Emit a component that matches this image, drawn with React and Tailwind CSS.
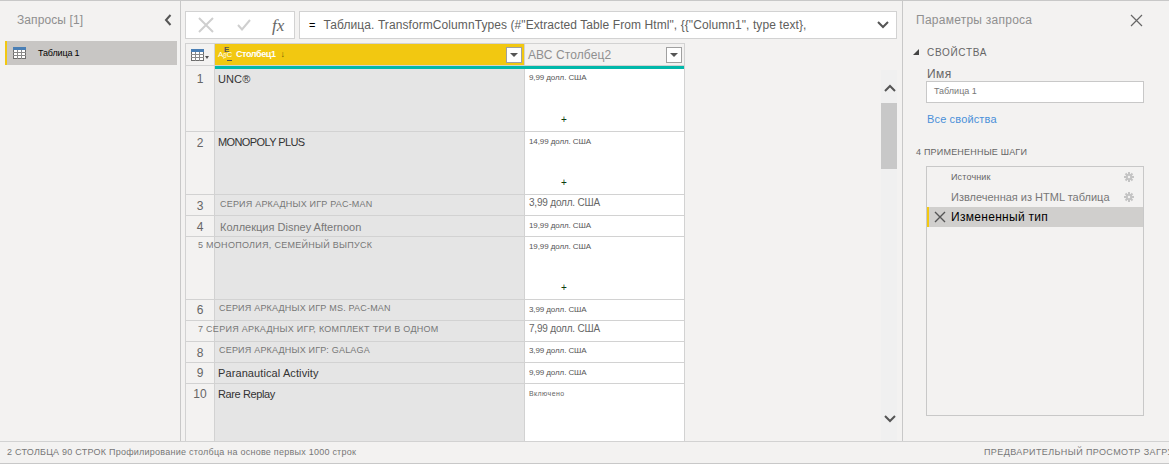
import React from "react";

function TableIcon() {
  return (
    <svg width="13" height="12" viewBox="0 0 13 12" className="shrink-0">
      <rect x="0.5" y="0.5" width="12" height="11" fill="#fff" stroke="#6d6d6d" />
      <rect x="0" y="0" width="13" height="3" fill="#4a7fb5" />
      <path d="M0 5.5H13M0 8.5H13M4.5 3V12M8.5 3V12" stroke="#8a8a8a" strokeWidth="1" />
    </svg>
  );
}

function FilterBtn() {
  return (
    <div className="w-[16px] h-[16px] border border-[#a0a0a0] bg-white flex items-center justify-center shrink-0">
      <svg width="8" height="4" viewBox="0 0 8 4"><path d="M0 0H8L4 4Z" fill="#555" /></svg>
    </div>
  );
}

function Gear() {
  return (
    <svg width="12" height="12" viewBox="0 0 12 12" className="shrink-0">
      <path d="M6 1V11M1 6H11M2.5 2.5L9.5 9.5M9.5 2.5L2.5 9.5" stroke="#c4c4c4" strokeWidth="2" />
      <circle cx="6" cy="6" r="3.2" fill="#c4c4c4" />
      <circle cx="6" cy="6" r="1.2" fill="#f3f2f1" />
    </svg>
  );
}

const GREY = "text-[9px] tracking-[0.2px] text-[#777]";
const DARK = "text-[11px] tracking-[0.1px] text-[#333]";
const P_SMALL = "text-[8px] tracking-[-0.1px] text-[#555]";
const P_BIG = "text-[10px] tracking-[-0.2px] text-[#666]";

const rows = [
  { n: "1", np: "pt-[1px]", h: "h-[63px]", name: "UNC®", nc: DARK, nx: "pl-[3px]", ny: "pt-[2px]", price: "9,99 долл. США", pc: P_SMALL, py: "pt-[2px]", plus: true },
  { n: "2", np: "pt-[2px]", h: "h-[63px]", name: "MONOPOLY PLUS", nc: "text-[11px] tracking-[-0.6px] text-[#333]", nx: "pl-[3px]", ny: "pt-[2px]", price: "14,99 долл. США", pc: P_SMALL, py: "pt-[3px]", plus: true },
  { n: "3", np: "pt-[2px]", h: "h-[21px]", name: "СЕРИЯ АРКАДНЫХ ИГР PAC-MAN", nc: GREY, nx: "pl-[5px]", ny: "pt-[1px]", price: "3,99 долл. США", pc: P_BIG, py: "pt-[1px]" },
  { n: "4", np: "pt-[2px]", h: "h-[21px]", name: "Коллекция Disney Afternoon", nc: "text-[11px] text-[#777]", nx: "pl-[5px]", ny: "pt-[3px]", price: "19,99 долл. США", pc: P_SMALL, py: "pt-[3px]" },
  { n: "5 МОНОПОЛИЯ, СЕМЕЙНЫЙ ВЫПУСК", over: true, h: "h-[63px]", price: "19,99 долл. США", pc: P_SMALL, py: "pt-[3px]", plus: true },
  { n: "6", np: "pt-[1px]", h: "h-[21px]", name: "СЕРИЯ АРКАДНЫХ ИГР MS. PAC-MAN", nc: GREY, nx: "pl-[4px]", ny: "pt-[0px]", price: "3,99 долл. США", pc: P_SMALL, py: "pt-[3px]" },
  { n: "7 СЕРИЯ АРКАДНЫХ ИГР, КОМПЛЕКТ ТРИ В ОДНОМ", over: true, h: "h-[21px]", price: "7,99 долл. США", pc: P_BIG, py: "pt-[1px]" },
  { n: "8", np: "pt-[2px]", h: "h-[21px]", name: "СЕРИЯ АРКАДНЫХ ИГР: GALAGA", nc: GREY, nx: "pl-[4px]", ny: "pt-[0px]", price: "3,99 долл. США", pc: P_SMALL, py: "pt-[2px]" },
  { n: "9", np: "pt-[1px]", h: "h-[21px]", name: "Paranautical Activity", nc: DARK, nx: "pl-[3px]", ny: "pt-[2px]", price: "9,99 долл. США", pc: P_SMALL, py: "pt-[3px]" },
  { n: "10", np: "pt-[1px]", h: "h-[57px]", name: "Rare Replay", nc: "text-[11px] tracking-[-0.4px] text-[#333]", nx: "pl-[3px]", ny: "pt-[2px]", price: "Включено", pc: "text-[7px] tracking-[0.4px] text-[#666]", py: "pt-[3px]", last: true },
];

function Row({ r }) {
  const b = r.last ? "" : "border-b border-[#d2d2d2]";
  return (
    <div className={`flex ${r.h}`}>
      <div className={`w-[29px] shrink-0 border-r border-[#d2d2d2] bg-[#f3f2f1] relative ${b}`}>
        {r.over ? (
          <span className="absolute left-[12px] top-[1px] z-10 whitespace-nowrap text-[9px] tracking-[0.28px] text-[#777] leading-[14px]">{r.n}</span>
        ) : (
          <div className={`text-center text-[12px] text-[#666] leading-[18px] ${r.np}`}>{r.n}</div>
        )}
      </div>
      <div className={`w-[309px] shrink-0 bg-[#e5e5e5] ${b} ${r.nx || ""} ${r.ny || ""}`}>
        {r.name && <span className={`block whitespace-nowrap leading-[16px] ${r.nc}`}>{r.name}</span>}
      </div>
      <div className={`w-[160px] shrink-0 bg-white border-l border-[#d2d2d2] relative pl-[4px] ${b} ${r.py}`}>
        <span className={`block whitespace-nowrap leading-[14px] ${r.pc}`}>{r.price}</span>
        {r.plus && <span className="absolute left-[36px] bottom-[6px] text-[10px] leading-[10px] font-medium text-[#0d3d0d]">+</span>}
      </div>
    </div>
  );
}

export default function App() {
  return (
    <div className="w-[1169px] h-[464px] bg-[#f3f2f1] flex flex-col overflow-hidden border-t border-b border-[#c8c8c8] font-['Liberation_Sans','Noto_Sans',sans-serif]">
      <div className="flex flex-1 min-h-0">
        {/* Left pane */}
        <div className="w-[181px] shrink-0 border-r border-[#c8c8c8] flex flex-col pt-[11px] pl-[5px]">
          <div className="flex items-center justify-between h-[16px] pl-[12px] pr-[8px]">
            <span className="text-[12px] tracking-[0.1px] text-[#8f8f8f] leading-[16px]">Запросы [1]</span>
            <svg width="8" height="12" viewBox="0 0 8 12"><path d="M6.5 1L2 6L6.5 11" fill="none" stroke="#555" strokeWidth="2" /></svg>
          </div>
          <div className="mt-[13px] h-[24px] w-[172px] bg-[#c8c6c4] border-l-2 border-[#f2c811] flex items-center pl-[6px]">
            <TableIcon />
            <span className="ml-[12px] pt-[2px] text-[9px] tracking-[-0.15px] text-black">Таблица 1</span>
          </div>
        </div>

        {/* Centre */}
        <div className="w-[721px] shrink-0 flex flex-col pl-[4px] pr-[5px] pt-[10px]">
          <div className="flex gap-[4px] h-[28px] shrink-0">
            <div className="w-[110px] border border-[#d2d2d2] bg-white flex items-center pl-[12px]">
              <svg width="16" height="16" viewBox="0 0 16 16"><path d="M1 1L15 15M15 1L1 15" stroke="#cfcfcf" strokeWidth="2" /></svg>
              <svg width="14" height="12" viewBox="0 0 14 12" className="ml-[23px]"><path d="M1 6L5 10.5L13 1" fill="none" stroke="#cfcfcf" strokeWidth="2" /></svg>
              <span className="ml-[21px] text-[17px] italic font-['Liberation_Serif',serif] text-[#666] leading-none">fx</span>
            </div>
            <div className="flex-1 border border-[#d2d2d2] bg-white flex items-center pl-[9px] pr-[7px]">
              <span className="text-[11px] text-black mr-[8px]">=</span>
              <span className="flex-1 text-[12px] tracking-[0.08px] text-[#605e5c] whitespace-nowrap overflow-hidden">Таблица. TransformColumnTypes (#"Extracted Table From Html", {'{{'}"Column1", type text},</span>
              <svg width="12" height="8" viewBox="0 0 12 8"><path d="M1 1L6 6L11 1" fill="none" stroke="#555" strokeWidth="2" /></svg>
            </div>
          </div>

          <div className="flex flex-1 min-h-0 mt-[4px]">
            {/* Table */}
            <div className="w-[500px] shrink-0 flex flex-col border-t border-l border-r border-[#d2d2d2] self-stretch">
              <div className="flex h-[21px] shrink-0">
                <div className="w-[29px] shrink-0 bg-[#f3f2f1] border-r border-[#d2d2d2] flex items-center pl-[5px]">
                  <TableIcon />
                  <svg width="4" height="3" viewBox="0 0 4 3" className="ml-[1px] mt-[5px]"><path d="M0 0H4L2 3Z" fill="#555" /></svg>
                </div>
                <div className="w-[309px] shrink-0 bg-[#f2c811] flex items-center pl-[3px] pr-[2px]">
                  <span className="flex-1 text-[9px] font-bold tracking-[-0.4px] text-white whitespace-nowrap flex items-center gap-[3px]">
                    <span className="relative w-[14px] text-[8px] font-normal tracking-normal">
                      AᵦC
                      <span className="absolute left-[6px] -top-[5px] text-[8px] font-bold text-[#555]">E</span>
                      <span className="absolute left-[9px] top-[11px] w-[5px] h-[1px] bg-[#555]"></span>
                    </span>
                    <span className="ml-[1px]">Столбец1</span>
                    <span className="ml-[2px] text-[#6b5a00] font-normal">↓</span>
                  </span>
                  <FilterBtn />
                </div>
                <div className="w-[160px] shrink-0 bg-[#f3f2f1] border-l border-[#d2d2d2] flex items-center pl-[3px] pr-[2px]">
                  <span className="flex-1 text-[12px] tracking-[0.1px] text-[#8f8f8f] whitespace-nowrap">АВС Столбец2</span>
                  <FilterBtn />
                </div>
              </div>
              <div className="flex h-[4px] shrink-0 border-t border-[#d2d2d2]">
                <div className="w-[29px] shrink-0 bg-[#f3f2f1] border-r border-[#d2d2d2]"></div>
                <div className="flex-1 bg-[#01b8aa]"></div>
              </div>
              {rows.map((r) => <Row key={r.n} r={r} />)}
            </div>
            <div className="flex-1"></div>
            {/* Scrollbar */}
            <div className="w-[16px] shrink-0 bg-[#f0f0f0] flex flex-col items-center mt-[27px]">
              <div className="h-[33px] flex items-center justify-center pt-[2px]">
                <svg width="12" height="8" viewBox="0 0 12 8" className="ml-[1px]"><path d="M1 7L6 2L11 7" fill="none" stroke="#555" strokeWidth="2" /></svg>
              </div>
              <div className="w-full h-[66px] bg-[#c8c8c8]"></div>
              <div className="flex-1"></div>
              <div className="h-[33px] flex items-start justify-center pt-[7px]">
                <svg width="12" height="8" viewBox="0 0 12 8" className="ml-[1px]"><path d="M1 1L6 6L11 1" fill="none" stroke="#555" strokeWidth="2" /></svg>
              </div>
            </div>
          </div>
        </div>

        {/* Right pane */}
        <div className="flex-1 border-l border-[#c8c8c8] flex flex-col pt-[11px] pl-[13px] pr-[25px]">
          <div className="flex items-center justify-between h-[16px]">
            <span className="text-[12px] tracking-[0.25px] text-[#8f8f8f] leading-[16px]">Параметры запроса</span>
            <svg width="13" height="13" viewBox="0 0 13 13" className="mr-[1px]"><path d="M1 1L12 12M12 1L1 12" stroke="#666" strokeWidth="1.2" /></svg>
          </div>
          <div className="flex items-center mt-[17px] h-[14px]">
            <svg width="6" height="6" viewBox="0 0 6 6" className="-ml-[3px]"><path d="M6 0V6H0Z" fill="#444" /></svg>
            <span className="ml-[8px] text-[10px] tracking-[0.7px] text-[#666]">СВОЙСТВА</span>
          </div>
          <div className="ml-[10px]">
            <div className="pl-[1px] text-[12px] tracking-[0.4px] text-[#666] leading-[13px] mt-[9px]">Имя</div>
            <div className="h-[22px] border border-[#c8c8c8] bg-white flex items-center pl-[7px] text-[9px] text-[#777]">Таблица 1</div>
            <div className="pl-[1px] mt-[9px] text-[11px] tracking-[0.15px] text-[#4a90d9] leading-[14px]">Все свойства</div>
          </div>
          <div className="mt-[20px] text-[9px] tracking-[0.2px] text-[#666] leading-[12px]">4 ПРИМЕНЕННЫЕ ШАГИ</div>
          <div className="ml-[10px] mt-[8px] h-[250px] border border-[#c8c8c8] flex flex-col">
            <div className="h-[20px] flex items-center pl-[24px] pr-[8px] justify-between">
              <span className="pt-[1px] text-[9px] tracking-[0.15px] text-[#666]">Источник</span><Gear />
            </div>
            <div className="h-[20px] flex items-center pl-[24px] pr-[8px] justify-between">
              <span className="text-[11px] text-[#777] whitespace-nowrap">Извлеченная из HTML таблица</span><Gear />
            </div>
            <div className="h-[20px] bg-[#d0cfcd] border-l-2 border-[#f2c811] flex items-center pl-[5px]">
              <svg width="12" height="12" viewBox="0 0 12 12"><path d="M1 1L11 11M11 1L1 11" stroke="#555" strokeWidth="1.4" /></svg>
              <span className="ml-[5px] text-[12px] tracking-[0.3px] text-black">Измененный тип</span>
            </div>
          </div>
        </div>
      </div>

      {/* Status bar */}
      <div className="h-[22px] shrink-0 border-t border-[#d2d2d2] flex items-center justify-between pl-[7px] overflow-hidden">
        <span className="text-[9px] tracking-[0.24px] text-[#777] whitespace-nowrap">2 СТОЛБЦА 90 СТРОК Профилирование столбца на основе первых 1000 строк</span>
        <span className="text-[9px] tracking-[0.4px] text-[#777] whitespace-nowrap w-[185px] overflow-hidden">ПРЕДВАРИТЕЛЬНЫЙ ПРОСМОТР ЗАГРУЗКИ</span>
      </div>
    </div>
  );
}
